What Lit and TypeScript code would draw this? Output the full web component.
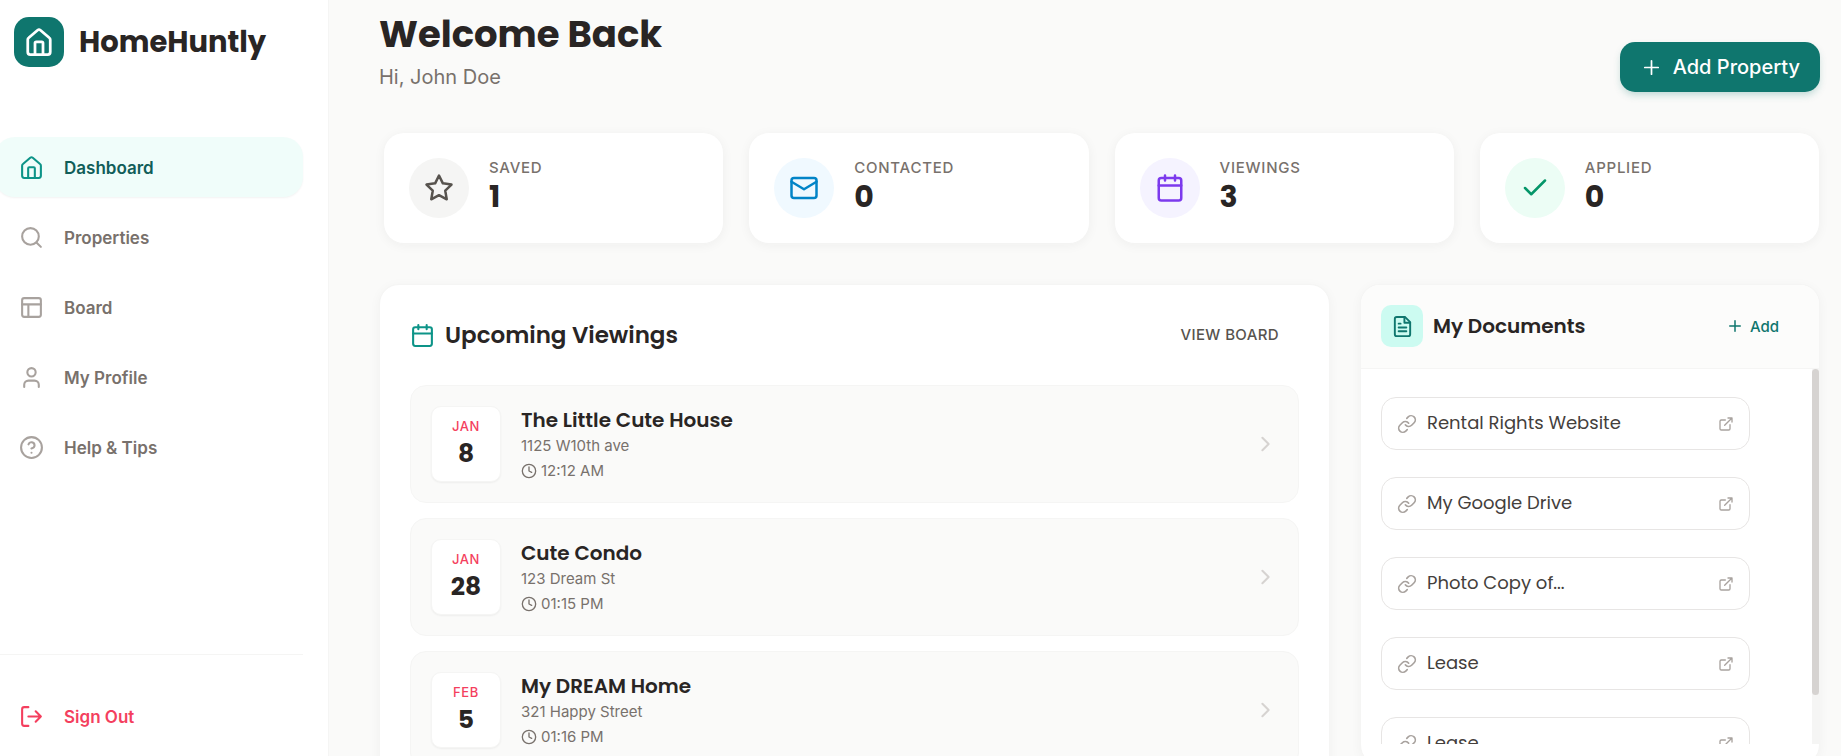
import { LitElement, html, svg, css, type TemplateResult } from "lit";
import { customElement, property } from "lit/decorators.js";
import { classMap } from "lit/directives/class-map.js";

const ICONS: Record<string, TemplateResult> = {
  home: svg`<path d="M3 10.2a2 2 0 0 1 .8-1.6l7-6a2 2 0 0 1 2.4 0l7 6a2 2 0 0 1 .8 1.6V20a2 2 0 0 1-2 2H5a2 2 0 0 1-2-2z"/><path d="M8.800 22V12.800a1 1 0 0 1 1-1h4.400a1 1 0 0 1 1 1V22"/>`,
  search: svg`<circle cx="11" cy="11" r="8"/><path d="m21 21-4.300-4.300"/>`,
  board: svg`<rect x="3" y="3" width="18" height="18" rx="2"/><path d="M3 9h18M9 21V9"/>`,
  user: svg`<circle cx="12" cy="7" r="4"/><path d="M19 21v-2a4 4 0 0 0-4-4H9a4 4 0 0 0-4 4v2"/>`,
  help: svg`<circle cx="12" cy="12" r="10"/><path d="M9.090 9a3 3 0 0 1 5.830 1c0 2-3 3-3 3M12 17h.01"/>`,
  logout: svg`<path d="M9 21H5a2 2 0 0 1-2-2V5a2 2 0 0 1 2-2h4M16 17l5-5-5-5M21 12H9"/>`,
  star: svg`<path d="m12 2 3.090 6.260L22 9.270l-5 4.870 1.180 6.880L12 17.770l-6.180 3.250L7 14.140 2 9.270l6.910-1.010z"/>`,
  mail: svg`<rect x="2" y="4" width="20" height="16" rx="2"/><path d="m22 7-10 6L2 7"/>`,
  calendar: svg`<rect x="3" y="4" width="18" height="18" rx="2"/><path d="M8 2v4M16 2v4M3 10h18"/>`,
  check: svg`<path d="M20 6 9 17l-5-5"/>`,
  plus: svg`<path d="M5 12h14M12 5v14"/>`,
  clock: svg`<circle cx="12" cy="12" r="10"/><path d="M12 6v6l4 2"/>`,
  chevron: svg`<path d="m9 18 6-6-6-6"/>`,
  file: svg`<path d="M14.500 2H6a2 2 0 0 0-2 2v16a2 2 0 0 0 2 2h12a2 2 0 0 0 2-2V7.500z"/><path d="M14 2v6h6M16 13H8M16 17H8M10 9H8"/>`,
  link: svg`<path d="M10 13a5 5 0 0 0 7.540.540l3-3a5 5 0 0 0-7.070-7.070l-1.720 1.710"/><path d="M14 11a5 5 0 0 0-7.540-.540l-3 3a5 5 0 0 0 7.070 7.070l1.710-1.710"/>`,
  external: svg`<path d="M18 13v6a2 2 0 0 1-2 2H5a2 2 0 0 1-2-2V8a2 2 0 0 1 2-2h6M15 3h6v6M10 14 21 3"/>`,
};

@customElement("line-icon")
class LineIcon extends LitElement {
  @property() name = "";
  @property({ type: Number }) weight = 2;

  static styles = css`
    :host {
      display: block;
      flex: none;
      width: 25px;
      height: 25px;
    }
    svg {
      display: block;
      width: 100%;
      height: 100%;
      fill: none;
      stroke: currentColor;
      stroke-linecap: round;
      stroke-linejoin: round;
    }
  `;

  render() {
    return html`<svg viewBox="0 0 24 24" stroke-width=${this.weight} aria-hidden="true">${ICONS[this.name]}</svg>`;
  }
}

const NAV = [
  { icon: "home", label: "Dashboard", active: true },
  { icon: "search", label: "Properties", active: false },
  { icon: "board", label: "Board", active: false },
  { icon: "user", label: "My Profile", active: false },
  { icon: "help", label: "Help & Tips", active: false },
];

const STATS = [
  { tone: "stone", icon: "star", label: "Saved", value: 1 },
  { tone: "sky", icon: "mail", label: "Contacted", value: 0 },
  { tone: "violet", icon: "calendar", label: "Viewings", value: 3 },
  { tone: "green", icon: "check", label: "Applied", value: 0 },
];

const VIEWINGS = [
  { month: "Jan", day: 8, title: "The Little Cute House", address: "1125 W10th ave", time: "12:12 AM" },
  { month: "Jan", day: 28, title: "Cute Condo", address: "123 Dream St", time: "01:15 PM" },
  { month: "Feb", day: 5, title: "My DREAM Home", address: "321 Happy Street", time: "01:16 PM" },
];

const DOCUMENTS = ["Rental Rights Website", "My Google Drive", "Photo Copy of...", "Lease", "Lease"];

@customElement("app-root")
class AppRoot extends LitElement {
  static styles = css`
    :host {
      display: block;
      height: 100vh;
      overflow: hidden;
      font-family: Inter, "Open Sans", sans-serif;
      font-size: 16px;
      color: #292524;
      background: #fafaf9;
      --display: Poppins, Inter, sans-serif;
    }
    * {
      box-sizing: border-box;
    }
    h1,
    h2,
    h3,
    p,
    ul,
    dl,
    dd {
      margin: 0;
      padding: 0;
    }
    ul {
      list-style: none;
    }
    a {
      color: inherit;
      text-decoration: none;
    }
    button {
      font: inherit;
      border: 0;
      background: none;
      cursor: pointer;
    }
    .shell {
      display: grid;
      grid-template-columns: 329px minmax(0, 1fr);
      height: 100%;
    }

    .sidebar {
      display: flex;
      flex-direction: column;
      padding: 17px 25px 10px 0;
      background: #fff;
      border-right: 1px solid #f5f5f4;
      overflow: hidden;
    }
    .brand {
      display: flex;
      align-items: center;
      gap: 15px;
      margin: 0 0 70px 14px;
      font: 700 29px/50px var(--display);
    }
    .brand-mark {
      display: grid;
      place-items: center;
      width: 50px;
      height: 50px;
      border-radius: 15px;
      background: #0f766e;
      color: #fff;
    }
    .brand-mark line-icon {
      width: 30px;
      height: 30px;
    }
    .nav {
      display: flex;
      flex-direction: column;
      gap: 10px;
    }
    .nav-link {
      display: flex;
      align-items: center;
      gap: 20px;
      height: 60px;
      margin-left: -5px;
      padding: 1px 0 0 24px;
      border-radius: 20px;
      font-size: 17px;
      font-weight: 600;
      color: #78716c;
    }
    .nav-link line-icon {
      color: #a8a29e;
    }
    .nav-link.active {
      background: #f0fdfa;
      color: #115e59;
      box-shadow: 0 1px 2px rgba(0, 0, 0, 0.05);
    }
    .nav-link.active line-icon {
      color: #0d9488;
    }
    .account {
      margin-top: auto;
      padding-top: 31px;
      border-top: 1px solid #f5f5f4;
    }
    .nav-link.danger,
    .nav-link.danger line-icon {
      color: #f43f5e;
    }

    .main {
      padding: 6px 21px 0 50px;
      overflow: hidden;
    }
    .page-head {
      display: flex;
      justify-content: space-between;
      align-items: flex-end;
      margin-bottom: 41px;
    }
    h1 {
      font: 700 37px/56px var(--display);
    }
    .greeting {
      font-size: 20px;
      line-height: 30px;
      color: #78716c;
    }
    .primary {
      display: flex;
      align-items: center;
      gap: 10px;
      height: 50px;
      padding: 0 20px;
      border-radius: 15px;
      background: #0f766e;
      color: #fff;
      font-size: 20px;
      font-weight: 500;
      box-shadow: 0 4px 8px -2px rgba(15, 118, 110, 0.3);
    }
    .primary line-icon {
      width: 23px;
      height: 23px;
    }

    .stats {
      display: grid;
      grid-template-columns: repeat(4, minmax(0, 1fr));
      gap: 26px;
      margin: 0 1px 41px 5px;
    }
    .stat {
      display: flex;
      align-items: center;
      gap: 20px;
      height: 110px;
      padding: 0 25px;
      border-radius: 20px;
      background: #fff;
      box-shadow: 0 2px 12px rgba(41, 37, 36, 0.05);
    }
    .stat-icon {
      display: grid;
      place-items: center;
      width: 60px;
      height: 60px;
      border-radius: 50%;
    }
    .stat-icon line-icon {
      width: 30px;
      height: 30px;
    }
    .stone {
      background: #f5f5f4;
      color: #57534e;
    }
    .sky {
      background: #f0f9ff;
      color: #0284c7;
    }
    .violet {
      background: #f5f3ff;
      color: #7c3aed;
    }
    .green {
      background: #ecfdf5;
      color: #059669;
    }
    .stat dt {
      font-size: 15px;
      font-weight: 500;
      line-height: 18px;
      letter-spacing: 0.05em;
      text-transform: uppercase;
      color: #78716c;
    }
    .stat dd {
      font: 700 30px/40px var(--display);
    }

    .panels {
      display: grid;
      grid-template-columns: minmax(0, 1fr) 460px;
      gap: 30px;
      align-items: start;
    }
    .panel {
      border: 1px solid #f5f5f4;
      border-radius: 20px;
      background: #fff;
      box-shadow: 0 2px 12px rgba(41, 37, 36, 0.04);
      overflow: hidden;
    }
    .viewings {
      padding: 30px;
    }
    .viewings-head {
      display: flex;
      align-items: center;
      gap: 10px;
      height: 40px;
      margin-bottom: 30px;
    }
    .viewings-head line-icon {
      color: #0d9488;
    }
    .viewings-head h2 {
      flex: 1;
      font: 600 23px/36px var(--display);
    }
    .text-button {
      padding: 0 20px 1px;
      font-size: 15px;
      font-weight: 500;
      letter-spacing: 0.025em;
      text-transform: uppercase;
      color: #57534e;
    }
    .viewing-list {
      display: flex;
      flex-direction: column;
      gap: 15px;
    }
    .viewing {
      display: flex;
      align-items: center;
      gap: 20px;
      height: 118px;
      padding: 0 20px;
      border: 1px solid #f5f5f4;
      border-radius: 16px;
      background: #fafaf9;
    }
    .date {
      display: flex;
      flex-direction: column;
      justify-content: center;
      width: 70px;
      height: 76px;
      border: 1px solid #f5f5f4;
      border-radius: 10px;
      background: #fff;
      text-align: center;
      box-shadow: 0 1px 2px rgba(0, 0, 0, 0.05);
    }
    .month {
      font-size: 13px;
      font-weight: 500;
      line-height: 19px;
      letter-spacing: 0.05em;
      text-transform: uppercase;
      color: #f43f5e;
    }
    .day {
      font: 700 25px/36px var(--display);
    }
    .details {
      flex: 1;
      min-width: 0;
      padding-top: 3px;
      font-size: 15px;
      line-height: 25px;
      color: #78716c;
    }
    .details h3 {
      font: 600 20px/25px var(--display);
      color: #292524;
    }
    .time {
      display: flex;
      align-items: center;
      gap: 4px;
    }
    .time line-icon {
      width: 16px;
      height: 16px;
    }
    .viewing > line-icon {
      height: 26px;
      color: #d6d3d1;
    }

    .documents-head {
      display: flex;
      align-items: center;
      gap: 10px;
      height: 84px;
      padding: 0 40px 1px 20px;
      border-bottom: 1px solid #f5f5f4;
      background: #fcfcfb;
    }
    .documents-head h2 {
      flex: 1;
      font: 600 20px/30px var(--display);
    }
    .file-mark {
      display: grid;
      place-items: center;
      width: 42px;
      height: 42px;
      border-radius: 10px;
      background: #ccfbf1;
      color: #0f766e;
    }
    .file-mark line-icon {
      width: 23px;
      height: 23px;
    }
    .add {
      display: flex;
      align-items: center;
      gap: 6px;
      padding: 0;
      font-size: 15px;
      font-weight: 500;
      color: #0f766e;
    }
    .add line-icon {
      width: 18px;
      height: 18px;
    }
    .documents-body {
      display: flex;
      height: 375px;
      margin-bottom: 20px;
    }
    .document-list {
      display: flex;
      flex-direction: column;
      gap: 27px;
      flex: 1;
      padding: 28px 62px 28px 20px;
      overflow: hidden;
    }
    .document {
      display: flex;
      align-items: center;
      gap: 10px;
      height: 53px;
      padding: 0 15px;
      border: 1px solid #e7e5e4;
      border-radius: 15px;
      font: 400 18px/26px var(--display);
      color: #44403c;
    }
    .document span {
      flex: 1;
      padding-bottom: 1px;
    }
    .document line-icon {
      width: 20px;
      height: 20px;
      color: #a8a29e;
    }
    .document .open {
      width: 16px;
      height: 16px;
    }
    .track {
      width: 7px;
      background: #f5f5f4;
    }
    .thumb {
      height: 87%;
      border-radius: 4px;
      background: #d6d3d1;
    }
  `;

  render() {
    return html`
      <div class="shell">
        <aside class="sidebar">
          <a class="brand" href="#">
            <span class="brand-mark"><line-icon name="home" weight="2.2"></line-icon></span>
            HomeHuntly
          </a>
          <nav class="nav">
            ${NAV.map(
              (item) => html`
                <a class=${classMap({ "nav-link": true, active: item.active })} href="#">
                  <line-icon name=${item.icon}></line-icon>${item.label}
                </a>
              `,
            )}
          </nav>
          <div class="account">
            <a class="nav-link danger" href="#"><line-icon name="logout"></line-icon>Sign Out</a>
          </div>
        </aside>

        <main class="main">
          <header class="page-head">
            <div>
              <h1>Welcome Back</h1>
              <p class="greeting">Hi, John Doe</p>
            </div>
            <button class="primary" type="button"><line-icon name="plus" weight="1.8"></line-icon>Add Property</button>
          </header>

          <section class="stats" aria-label="Summary">
            ${STATS.map(
              (stat) => html`
                <div class="stat">
                  <span class="stat-icon ${stat.tone}"><line-icon name=${stat.icon}></line-icon></span>
                  <dl>
                    <dt>${stat.label}</dt>
                    <dd>${stat.value}</dd>
                  </dl>
                </div>
              `,
            )}
          </section>

          <div class="panels">
            <section class="panel viewings">
              <header class="viewings-head">
                <line-icon name="calendar"></line-icon>
                <h2>Upcoming Viewings</h2>
                <button class="text-button" type="button">View Board</button>
              </header>
              <div class="viewing-list">
                ${VIEWINGS.map(
                  (v) => html`
                    <a class="viewing" href="#">
                      <div class="date">
                        <span class="month">${v.month}</span>
                        <span class="day">${v.day}</span>
                      </div>
                      <div class="details">
                        <h3>${v.title}</h3>
                        <p>${v.address}</p>
                        <p class="time"><line-icon name="clock"></line-icon>${v.time}</p>
                      </div>
                      <line-icon name="chevron"></line-icon>
                    </a>
                  `,
                )}
              </div>
            </section>

            <section class="panel">
              <header class="documents-head">
                <span class="file-mark"><line-icon name="file"></line-icon></span>
                <h2>My Documents</h2>
                <button class="add" type="button"><line-icon name="plus"></line-icon>Add</button>
              </header>
              <div class="documents-body">
                <ul class="document-list">
                  ${DOCUMENTS.map(
                    (name) => html`
                      <li>
                        <a class="document" href="#">
                          <line-icon name="link"></line-icon>
                          <span>${name}</span>
                          <line-icon class="open" name="external"></line-icon>
                        </a>
                      </li>
                    `,
                  )}
                </ul>
                <div class="track"><div class="thumb"></div></div>
              </div>
            </section>
          </div>
        </main>
      </div>
    `;
  }
}
